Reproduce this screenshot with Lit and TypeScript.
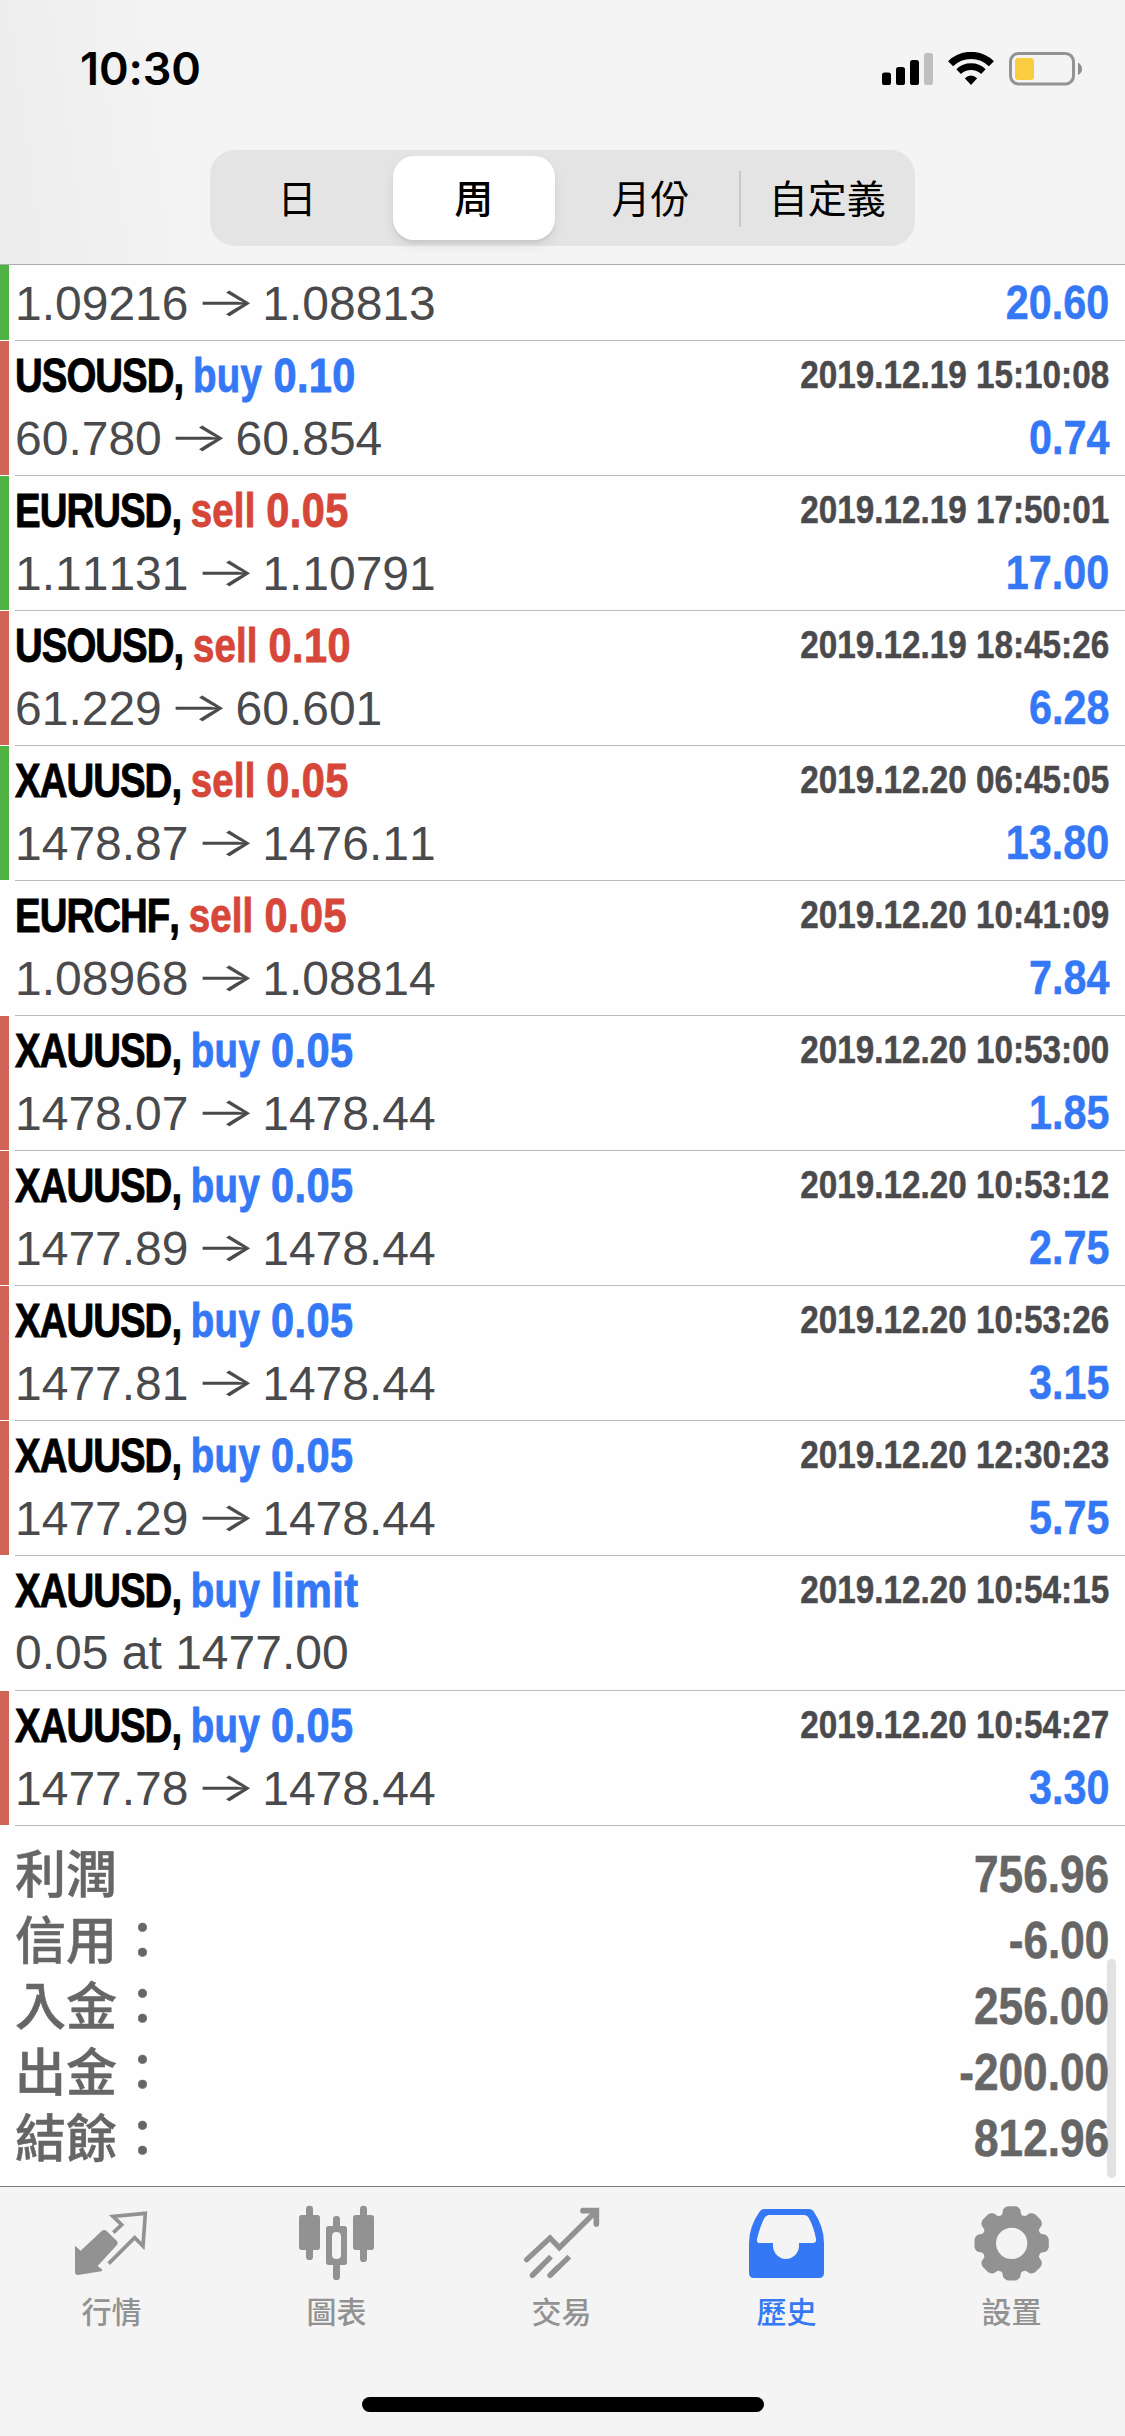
import { LitElement, html, css, svg, nothing } from "lit";
import { customElement, property } from "lit/decorators.js";
import { classMap } from "lit/directives/class-map.js";

type Mark = "green" | "red" | "";

interface Deal {
  mark: Mark;
  symbol: string;
  side: "buy" | "sell";
  volume: string;
  from: string;
  to: string;
  time: string;
  profit: string;
}

const deal = (
  mark: Mark,
  symbol: string,
  side: "buy" | "sell",
  volume: string,
  from: string,
  to: string,
  time: string,
  profit: string
): Deal => ({ mark, symbol, side, volume, from, to, time, profit });

const DEALS: Deal[] = [
  deal("green", "", "sell", "", "1.09216", "1.08813", "", "20.60"),
  deal("red", "USOUSD", "buy", "0.10", "60.780", "60.854", "2019.12.19 15:10:08", "0.74"),
  deal("green", "EURUSD", "sell", "0.05", "1.11131", "1.10791", "2019.12.19 17:50:01", "17.00"),
  deal("red", "USOUSD", "sell", "0.10", "61.229", "60.601", "2019.12.19 18:45:26", "6.28"),
  deal("green", "XAUUSD", "sell", "0.05", "1478.87", "1476.11", "2019.12.20 06:45:05", "13.80"),
  deal("", "EURCHF", "sell", "0.05", "1.08968", "1.08814", "2019.12.20 10:41:09", "7.84"),
  deal("red", "XAUUSD", "buy", "0.05", "1478.07", "1478.44", "2019.12.20 10:53:00", "1.85"),
  deal("red", "XAUUSD", "buy", "0.05", "1477.89", "1478.44", "2019.12.20 10:53:12", "2.75"),
  deal("red", "XAUUSD", "buy", "0.05", "1477.81", "1478.44", "2019.12.20 10:53:26", "3.15"),
  deal("red", "XAUUSD", "buy", "0.05", "1477.29", "1478.44", "2019.12.20 12:30:23", "5.75"),
  deal("", "XAUUSD", "buy", "limit", "0.05 at 1477.00", "", "2019.12.20 10:54:15", ""),
  deal("red", "XAUUSD", "buy", "0.05", "1477.78", "1478.44", "2019.12.20 10:54:27", "3.30"),
];

const TOTALS: [string, string][] = [
  ["利潤", "756.96"],
  ["信用：", "-6.00"],
  ["入金：", "256.00"],
  ["出金：", "-200.00"],
  ["結餘：", "812.96"],
];

@customElement("status-bar")
class StatusBar extends LitElement {
  static styles = css`
    :host {
      display: flex;
      justify-content: space-between;
      height: 150px;
      padding: 0 43px 0 80px;
      box-sizing: border-box;
    }
    .time {
      font: 600 45px/54px Inter, sans-serif;
      padding-top: 42px;
      letter-spacing: -0.1px;
    }
    .icons {
      display: block;
      margin-top: 52px;
    }
  `;
  render() {
    return html`
      <span class="time">10:30</span>
      <svg class="icons" width="200" height="34" viewBox="882 52 200 34">
        <rect x="882" y="72.5" width="9" height="12.5" rx="2.6" />
        <rect x="896" y="67" width="9" height="18" rx="2.6" />
        <rect x="910" y="60" width="9" height="25" rx="2.6" />
        <rect x="924" y="53" width="9" height="32" rx="2.6" fill="#bfbfbf" />
        <g fill="none" stroke="#000">
          <path d="M950.6 63.8A29 29 0 0 1 991.4 63.8" stroke-width="7.2" />
          <path d="M958.6 71.6A18 18 0 0 1 983.4 71.6" stroke-width="6.6" />
        </g>
        <path d="M964.8 78.3Q971 72.6 977.2 78.3L971 85Z" />
        <rect x="1010.5" y="53.5" width="63" height="30.5" rx="8" fill="none" stroke="#939393" stroke-width="3" />
        <rect x="1015" y="58" width="19" height="22" rx="3.5" fill="#f9cd3f" />
        <path d="M1078 62.5Q1082 65 1082 69Q1082 73 1078 75Z" fill="#8e8e8e" />
      </svg>
    `;
  }
}

@customElement("period-tabs")
class PeriodTabs extends LitElement {
  static styles = css`
    :host {
      display: grid;
      grid-template-columns: repeat(4, 1fr);
      width: 705px;
      height: 96px;
      margin: 0 auto;
      border-radius: 25px;
      background: #e4e4e4;
      font: 400 39px/80px "Noto Sans CJK TC", sans-serif;
      text-align: center;
    }
    .item {
      margin: 6px 7px;
      height: 84px;
      border-radius: 21px;
    }
    .first {
      padding-right: 2px;
    }
    .on {
      background: #fff;
      font-weight: 500;
      margin-right: 8px;
      box-shadow: 0 6px 12px rgba(0, 0, 0, 0.08), 0 3px 2px rgba(0, 0, 0, 0.05);
    }
    .ruled {
      margin-left: 0;
      padding-left: 8px;
      background: linear-gradient(#c8c8c8, #c8c8c8) 0 15px / 2px 56px no-repeat;
      border-radius: 0;
    }
  `;
  render() {
    return ["日", "周", "月份", "自定義"].map(
      (t, i) =>
        html`<div class=${classMap({ item: true, first: i === 0, on: i === 1, ruled: i === 3 })}>${t}</div>`
    );
  }
}

@customElement("deal-row")
class DealRow extends LitElement {
  @property({ attribute: false }) deal!: Deal;
  static styles = css`
    :host {
      display: flex;
      font: 400 48px/70px "Liberation Sans", sans-serif;
      font-kerning: none;
      color: #4a4a4c;
    }
    .mark {
      width: 9px;
      margin-bottom: 1px;
      margin-right: 6px;
    }
    .green {
      background: #4fb242;
    }
    .red {
      background: #d06456;
    }
    .body {
      flex: 1;
      padding: 6px 16px 1px 0;
      border-bottom: 1px solid #bcbcbc;
    }
    .cut {
      padding-top: 3px;
    }
    .line {
      display: flex;
      justify-content: space-between;
      height: 71px;
    }
    .head {
      height: 56px;
      font: 700 48px/58px "Liberation Sans", sans-serif;
      font-kerning: none;
      white-space: pre;
    }
    .title {
      transform: scaleX(0.8);
      transform-origin: left;
      -webkit-text-stroke: 0.9px currentColor;
    }
    .symbol {
      color: #000;
      letter-spacing: -1.2px;
      -webkit-text-stroke-color: #000;
    }
    .buy {
      color: #3478f6;
      -webkit-text-stroke-color: #3478f6;
      letter-spacing: 0.4px;
    }
    .sell {
      color: #d6473a;
      -webkit-text-stroke-color: #d6473a;
      letter-spacing: 0.2px;
    }
    .volume {
      display: inline-block;
      letter-spacing: 0.5px;
      transform: scaleX(1.08);
      transform-origin: left;
    }
    .time {
      font-size: 39px;
      line-height: 56px;
      transform: scaleX(0.853);
      transform-origin: right;
      -webkit-text-stroke: 0.5px currentColor;
    }
    .arrow {
      display: inline-block;
      width: 47px;
      text-align: center;
      font-family: Inter, sans-serif;
      font-weight: 300;
      -webkit-text-stroke: 0.5px currentColor;
      transform: translateY(-1px) scale(1.33, 0.82);
    }
    .profit {
      font-weight: 700;
      color: #3478f6;
      transform: scaleX(0.86);
      transform-origin: right;
      -webkit-text-stroke: 0.5px currentColor;
    }
  `;
  render() {
    const d = this.deal;
    return html`
      <div class="mark ${d.mark}"></div>
      <div class=${classMap({ body: true, cut: !d.symbol })}>
        ${d.symbol
          ? html`<div class="line head">
              <span class="title"><span class="symbol">${d.symbol}, </span><span class=${d.side}>${d.side} <span class="volume">${d.volume}</span></span></span>
              <span class="time">${d.time}</span>
            </div>`
          : nothing}
        <div class="line">
          <span>${d.from}${d.to ? html` <span class="arrow">→</span> ${d.to}` : nothing}</span>
          <span class="profit">${d.profit}</span>
        </div>
      </div>
    `;
  }
}

@customElement("totals-list")
class TotalsList extends LitElement {
  static styles = css`
    :host {
      display: block;
      position: relative;
      height: 360px;
      padding: 15px 16px 15px 15px;
      box-sizing: border-box;
      color: #666;
    }
    .row {
      display: flex;
      justify-content: space-between;
      height: 66px;
      font: 700 51px/68px "Liberation Sans", sans-serif;
      font-kerning: none;
    }
    .name {
      font: 500 51px/60px "Noto Sans CJK TC", sans-serif;
      -webkit-text-stroke: 0.5px #666;
    }
    .value {
      transform: scaleX(0.865);
      transform-origin: right;
      -webkit-text-stroke: 0.6px #666;
    }
    .thumb {
      position: absolute;
      right: 9px;
      top: 133px;
      width: 9px;
      height: 219px;
      border-radius: 4.5px;
      background: rgba(0, 0, 0, 0.11);
    }
  `;
  render() {
    return html`
      ${TOTALS.map(
        ([n, v]) => html`<div class="row"><span class="name">${n}</span><span class="value">${v}</span></div>`
      )}
      <div class="thumb"></div>
    `;
  }
}

const cog = () => {
  const pts: string[] = [];
  const at = (r: number, deg: number) => {
    const a = (deg * Math.PI) / 180;
    return `${(485 + r * Math.cos(a)).toFixed(1)} ${(190 + r * Math.sin(a)).toFixed(1)}`;
  };
  for (let k = 0; k < 8; k++) {
    const c = k * 45;
    pts.push(
      `${k ? "L" : "M"}${at(92, c - 18)}L${at(105, c - 14)}Q${at(112, c - 10)} ${at(112, c - 6)}L${at(112, c + 6)}Q${at(112, c + 10)} ${at(105, c + 14)}L${at(92, c + 18)}Q${at(88, c + 22.5)} ${at(92, c + 27)}`
    );
  }
  return pts.join("") + "ZM438 190a47 47 0 1 0 94 0a47 47 0 1 0 -94 0Z";
};

const TABS = [
  {
    label: "行情",
    box: "-120 21 675 309",
    art: svg`
      <path d="M105 197L122 212L185 153Q193 147 200 153L230 182Q236 189 230 196L173 258L188 270L184 274L114 285Q105 285 105 276Z" fill="#929292"/>
      <path d="M220 158L245 134L219 109L316 100L309 198L284 173L206 251" fill="none" stroke="#929292" stroke-width="11"/>`,
  },
  {
    label: "圖表",
    box: "555 21 675 309",
    art: svg`
      <g fill="#929292">
        <rect x="777" y="105" width="63" height="105" rx="8"/><rect x="798" y="77" width="21" height="163" rx="10"/>
        <rect x="939" y="105" width="63" height="105" rx="8"/><rect x="960" y="77" width="21" height="169" rx="10"/>
        <rect x="879" y="108" width="21" height="40" rx="10"/><rect x="879" y="245" width="21" height="55" rx="10"/>
        <path fill-rule="evenodd" d="M866 138H913Q921 138 921 146V247Q921 255 913 255H866Q858 255 858 247V146Q858 138 866 138ZM889.500 156Q876 156 876 169V224Q876 237 889.500 237Q903 237 903 224V169Q903 156 889.500 156Z"/>
      </g>`,
  },
  {
    label: "交易",
    box: "-90 21 675 309",
    art: svg`
      <g fill="none" stroke="#929292" stroke-width="16" stroke-linecap="round">
        <path d="M140 239L210 174L238 203L346 96"/>
        <path d="M309 92H349V132" stroke-width="17"/>
        <path d="M157 286L213 230M210 286L268 230" stroke-linecap="butt"/>
        <path d="M157 286L180 263M210 286L233 263"/>
      </g>`,
  },
  {
    label: "歷史",
    box: "585 21 675 309",
    art: svg`<path fill="#3478f6" fill-rule="evenodd" d="M852 87H987Q997 87 1002 96Q1032 140 1032 190V279Q1032 294 1017 294H822Q807 294 807 279V190Q807 140 838 96Q843 87 852 87ZM868 105Q858 105 852 116Q840 140 831 177Q829 189 840 189H879V200C881 222 900 237 918 237C936 237 955 222 957 200V189H998Q1010 189 1008 177Q1002 143 987 115Q981 105 971 105Z"/>`,
  },
  {
    label: "設置",
    box: "150 21 675 309",
    art: svg`<path fill="#929292" fill-rule="evenodd" d=${cog()}></path>`,
  },
];

@customElement("tab-bar")
class TabBar extends LitElement {
  static styles = css`
    :host {
      display: flex;
      flex-direction: column;
      justify-content: space-between;
      height: 250px;
      box-sizing: border-box;
      border-top: 1px solid #7c7c7c;
      background: #f4f4f4;
    }
    .tabs {
      display: grid;
      grid-template-columns: repeat(5, 1fr);
      text-align: center;
      color: #929292;
      font: 500 30px/40px "Noto Sans CJK TC", sans-serif;
    }
    .tab {
      padding-right: 2px;
      width: 223px;
    }
    .tab svg {
      display: block;
    }
    .on {
      color: #3478f6;
    }
    .home {
      width: 402px;
      height: 15px;
      margin: 0 auto 24px;
      border-radius: 8px;
      background: #000;
    }
  `;
  render() {
    return html`
      <div class="tabs">
        ${TABS.map(
          (t, i) => html`<div class=${classMap({ tab: true, on: i === 3 })}>
            <svg width="225" height="103" viewBox=${t.box}>${t.art}</svg>
            ${t.label}
          </div>`
        )}
      </div>
      <div class="home"></div>
    `;
  }
}

@customElement("app-root")
class AppRoot extends LitElement {
  static styles = css`
    :host {
      display: flex;
      flex-direction: column;
      width: 1125px;
      height: 2436px;
      overflow: hidden;
      background: #fefefe;
    }
    .top {
      height: 265px;
      box-sizing: border-box;
      border-bottom: 1px solid #adadad;
      background: linear-gradient(82deg, #ececec 0, #f4f4f4 18%);
    }
    .deals {
      display: flex;
      flex-direction: column;
    }
  `;
  render() {
    return html`
      <div class="top"><status-bar></status-bar><period-tabs></period-tabs></div>
      <div class="deals">${DEALS.map((d) => html`<deal-row .deal=${d}></deal-row>`)}</div>
      <totals-list></totals-list>
      <tab-bar></tab-bar>
    `;
  }
}
